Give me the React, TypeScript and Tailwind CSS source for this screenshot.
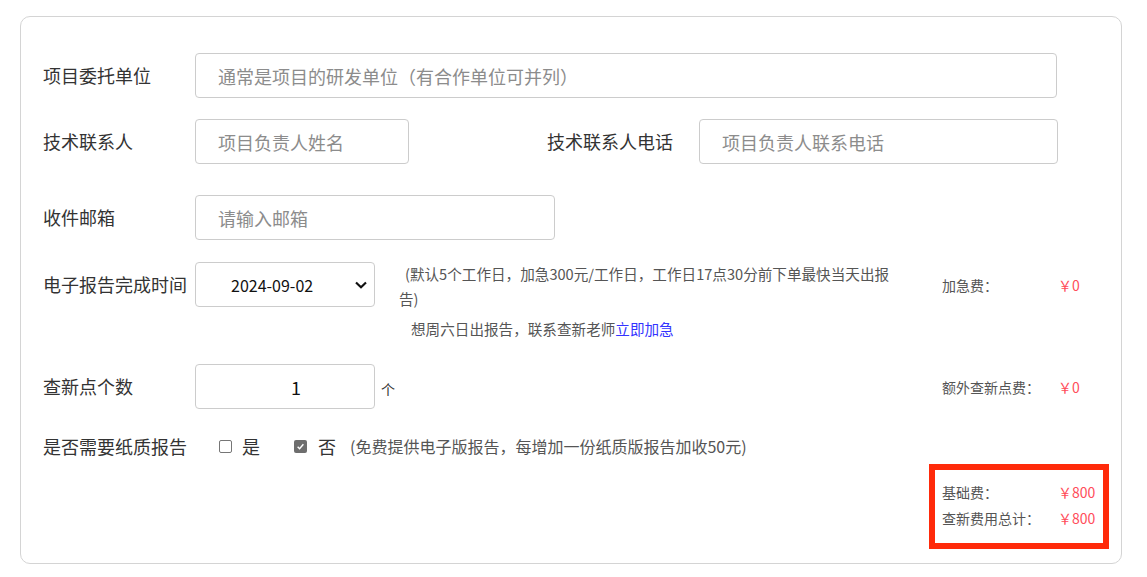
const font = { fontFamily: '"Microsoft YaHei", "Noto Sans CJK SC", "Noto Sans", sans-serif' };

function Field({ placeholder, w }: { placeholder: string; w: string }) {
  return (
    <input
      placeholder={placeholder}
      className={`${w} h-[45px] rounded-[4px] border border-[#cccccc] pl-[22px] text-[18px] text-[#333] outline-none placeholder:text-[#8c8c8c]`}
    />
  );
}

function Fee({ label, value }: { label: string; value: string }) {
  return (
    <div className="flex items-center text-[14px] leading-[26px]">
      <span className="w-[116px] text-[#555]">{label}</span>
      <span className="text-[#ff4d5a]">{value}</span>
    </div>
  );
}

function Box({ checked }: { checked?: boolean }) {
  return checked ? (
    <span className="flex h-[13px] w-[13px] shrink-0 items-center justify-center rounded-[2px] bg-[#6e6e6e]">
      <svg viewBox="0 0 10 10" className="h-[9px] w-[9px]">
        <path d="M1.8 5.2 L4 7.4 L8.2 2.6" fill="none" stroke="#fff" strokeWidth="1.6" />
      </svg>
    </span>
  ) : (
    <span className="block h-[13px] w-[13px] shrink-0 rounded-[2px] border border-[#767676] bg-white" />
  );
}

export default function App() {
  return (
    <div className="min-h-screen bg-white pt-[16px] pl-[20px]" style={font}>
      <div className="h-[548px] w-[1102px] rounded-[10px] border border-[#d4d4d4] pt-[36px] pl-[22px] pr-[12px]">
        {/* 项目委托单位 */}
        <div className="flex items-center">
          <label className="w-[152px] text-[18px] text-[#333]">项目委托单位</label>
          <Field w="w-[862px]" placeholder="通常是项目的研发单位（有合作单位可并列）" />
        </div>

        <div className="mt-[21px] flex items-center">
          <label className="w-[152px] text-[18px] text-[#333]">技术联系人</label>
          <Field w="w-[214px]" placeholder="项目负责人姓名" />
          <label className="ml-[138px] w-[152px] text-[18px] text-[#333]">技术联系人电话</label>
          <Field w="w-[359px]" placeholder="项目负责人联系电话" />
        </div>

        <div className="mt-[31px] flex items-center">
          <label className="w-[152px] text-[18px] text-[#333]">收件邮箱</label>
          <Field w="w-[360px]" placeholder="请输入邮箱" />
        </div>

        {/* 电子报告完成时间 */}
        <div className="mt-[22px] flex items-start">
          <div className="flex h-[45px] w-[152px] items-center text-[18px] text-[#333]">电子报告完成时间</div>
          <div className="relative flex h-[45px] w-[180px] items-center rounded-[4px] border border-[#cccccc] pl-[35px] text-[16px] text-[#111]">
            2024-09-02
            <svg viewBox="0 0 14 10" className="absolute right-[6px] top-[17px] h-[10px] w-[14px]">
              <path d="M2 2.5 L7 7.2 L12 2.5" fill="none" stroke="#111" strokeWidth="2.2" />
            </svg>
          </div>
          <div className="-mt-[1px] ml-[24px] w-[520px] text-[14.6px] text-[#555]">
            <p className="indent-[6px] leading-[25px]">
              (默认5个工作日，加急300元/工作日，工作日17点30分前下单最快当天出报
              <br />
              告)
            </p>
            <p className="mt-[5px] pl-[12px] leading-[25px]">
              想周六日出报告，联系查新老师<a className="text-[#3333ff]">立即加急</a>
            </p>
          </div>
          <div className="ml-auto flex h-[45px] w-[180px] items-center pl-[13px]">
            <Fee label="加急费：" value="￥0" />
          </div>
        </div>

        {/* 查新点个数 */}
        <div className="mt-[23px] flex items-center">
          <label className="w-[152px] text-[18px] text-[#333]">查新点个数</label>
          <input
            defaultValue="1"
            className="h-[45px] w-[180px] rounded-[4px] border border-[#cccccc] pl-[22px] text-center text-[18px] text-[#111] outline-none"
          />
          <span className="ml-[6px] mt-[5px] text-[14px] text-[#333]">个</span>
          <div className="ml-auto w-[180px] pl-[13px]">
            <Fee label="额外查新点费：" value="￥0" />
          </div>
        </div>

        {/* 是否需要纸质报告 */}
        <div className="mt-[22px] flex h-[30px] items-center">
          <label className="w-[152px] text-[18px] text-[#333]">是否需要纸质报告</label>
          <span className="ml-[24px] flex"><Box /></span>
          <span className="ml-[10px] text-[18px] text-[#333]">是</span>
          <span className="ml-[34px] flex"><Box checked /></span>
          <span className="ml-[11px] text-[18px] text-[#333]">否</span>
          <span className="ml-[14px] text-[16px] text-[#555]">(免费提供电子版报告，每增加一份纸质版报告加收50元)</span>
        </div>

        <div className="mt-[3px] flex justify-end">
          <div className="w-[180px] border-[6px] border-[#ff2a0a] pt-[9px] pb-[12px] pl-[7px]">
            <Fee label="基础费：" value="￥800" />
            <Fee label="查新费用总计：" value="￥800" />
          </div>
        </div>
      </div>
    </div>
  );
}
